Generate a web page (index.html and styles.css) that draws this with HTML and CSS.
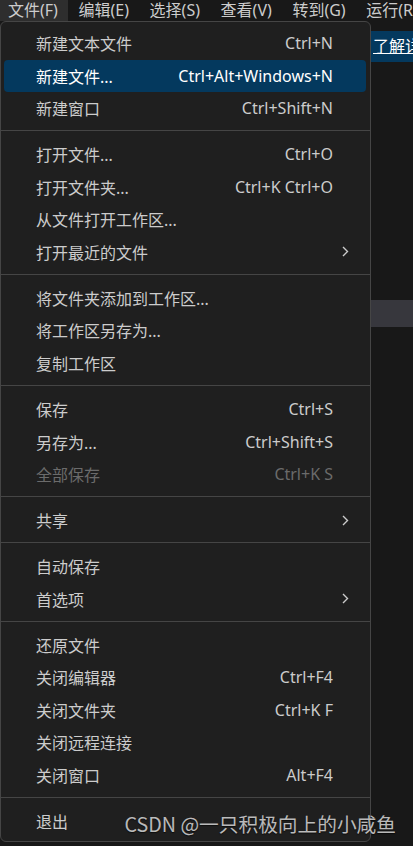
FILE: index.html
```html
<!DOCTYPE html>
<html lang="zh-CN">
<head>
  <meta charset="UTF-8">
  <title>文件菜单</title>
  <link rel="stylesheet" href="styles.css">
</head>
<body>
  <div class="workbench">
    <div class="menubar">
      <div class="menubar-item active">文件(F)</div>
      <div class="menubar-item">编辑(E)</div>
      <div class="menubar-item">选择(S)</div>
      <div class="menubar-item">查看(V)</div>
      <div class="menubar-item">转到(G)</div>
      <div class="menubar-item">运行(R)</div>
    </div>

    <div class="editor">
      <div class="notice-row"><a class="notice-link">了解详细信息</a></div>
      <div class="list-row"></div>
    </div>

    <!-- 下拉菜单 -->
    <div class="menu">
      <div class="menu-item"><span class="label">新建文本文件</span><span class="keys">Ctrl+N</span></div>
      <div class="menu-item selected"><span class="label">新建文件...</span><span class="keys">Ctrl+Alt+Windows+N</span></div>
      <div class="menu-item"><span class="label">新建窗口</span><span class="keys">Ctrl+Shift+N</span></div>
      <div class="separator"></div>

      <div class="menu-item"><span class="label">打开文件...</span><span class="keys">Ctrl+O</span></div>
      <div class="menu-item"><span class="label">打开文件夹...</span><span class="keys">Ctrl+K Ctrl+O</span></div>
      <div class="menu-item"><span class="label">从文件打开工作区...</span></div>
      <div class="menu-item"><span class="label">打开最近的文件</span><span class="keys"></span><svg class="chevron" viewBox="0 0 7 11"><path d="M1 1l4.5 4.5L1 10"/></svg></div>
      <div class="separator"></div>

      <div class="menu-item"><span class="label">将文件夹添加到工作区...</span></div>
      <div class="menu-item"><span class="label">将工作区另存为...</span></div>
      <div class="menu-item"><span class="label">复制工作区</span></div>
      <div class="separator"></div>

      <div class="menu-item"><span class="label">保存</span><span class="keys">Ctrl+S</span></div>
      <div class="menu-item"><span class="label">另存为...</span><span class="keys">Ctrl+Shift+S</span></div>
      <div class="menu-item disabled"><span class="label">全部保存</span><span class="keys">Ctrl+K S</span></div>
      <div class="separator"></div>

      <div class="menu-item"><span class="label">共享</span><span class="keys"></span><svg class="chevron" viewBox="0 0 7 11"><path d="M1 1l4.5 4.5L1 10"/></svg></div>
      <div class="separator"></div>

      <div class="menu-item"><span class="label">自动保存</span></div>
      <div class="menu-item"><span class="label">首选项</span><span class="keys"></span><svg class="chevron" viewBox="0 0 7 11"><path d="M1 1l4.5 4.5L1 10"/></svg></div>
      <div class="separator"></div>

      <div class="menu-item"><span class="label">还原文件</span></div>
      <div class="menu-item"><span class="label">关闭编辑器</span><span class="keys">Ctrl+F4</span></div>
      <div class="menu-item"><span class="label">关闭文件夹</span><span class="keys">Ctrl+K F</span></div>
      <div class="menu-item"><span class="label">关闭远程连接</span></div>
      <div class="menu-item"><span class="label">关闭窗口</span><span class="keys">Alt+F4</span></div>
      <div class="separator"></div>

      <div class="menu-item"><span class="label">退出</span></div>
    </div>

    <div class="watermark">CSDN @一只积极向上的小咸鱼</div>
  </div>
</body>
</html>
```

FILE: styles.css
```css
html, body {
  margin: 0;
  height: 100%;
}
body {
  font-family: "Noto Sans", "Noto Sans CJK SC", sans-serif;
  font-size: 16px;
  background-color: #181818;
  color: #cccccc;
  overflow: hidden;
}
.workbench {
  position: relative;
  height: 100%;
}
.menubar {
  display: flex;
  height: 21px;
  background-color: #181818;
  line-height: 20px;
}
.menubar-item {
  padding: 0 10px 0 8px;
  margin-right: 2.6px;
  white-space: nowrap;
}
.menubar-item.active {
  background-color: #2e2e2e;
  padding-right: 10px;
}
.editor {
  display: flex;
  flex-direction: column;
}
.notice-row {
  margin-top: 10px;
  height: 31px;
  background-color: #04395e;
  padding-left: 373px;
  white-space: nowrap;
  overflow: hidden;
  line-height: 30px;
}
.notice-link {
  color: #ffffff;
  text-decoration: underline;
}
.list-row {
  margin-top: 238px;
  height: 27px;
  background-color: #37373d;
}
.menu {
  position: absolute;
  top: 21px;
  left: 0;
  width: 369px;
  padding: 5px 0 4px;
  background-color: #1f1f1f;
  border: 1px solid #454545;
  border-radius: 6px;
}
.menu-item {
  display: grid;
  grid-template-columns: 1fr auto 33px;
  align-items: center;
  height: 32.5px;
  margin: 0 4px 0 3px;
  padding-left: 32px;
  border-radius: 4px;
  white-space: nowrap;
}
.menu-item.selected {
  background-color: #04395e;
  color: #ffffff;
}
.menu-item.disabled {
  color: #6b6b6b;
}
.keys {
  text-align: right;
}
.chevron {
  width: 7px;
  height: 11px;
  margin-left: 9px;
  fill: none;
  stroke: #cccccc;
  stroke-width: 1.4;
}
.separator {
  margin: 5.8px 0 6.8px;
  border-top: 1px solid #454545;
}
.watermark {
  position: absolute;
  right: 17px;
  bottom: 8px;
  font-family: "Noto Sans CJK SC", sans-serif;
  font-size: 19.7px;
  color: rgba(225, 225, 225, 0.82);
  text-shadow: 0 1px 1px rgba(0, 0, 0, 0.6);
  white-space: nowrap;
}
```
